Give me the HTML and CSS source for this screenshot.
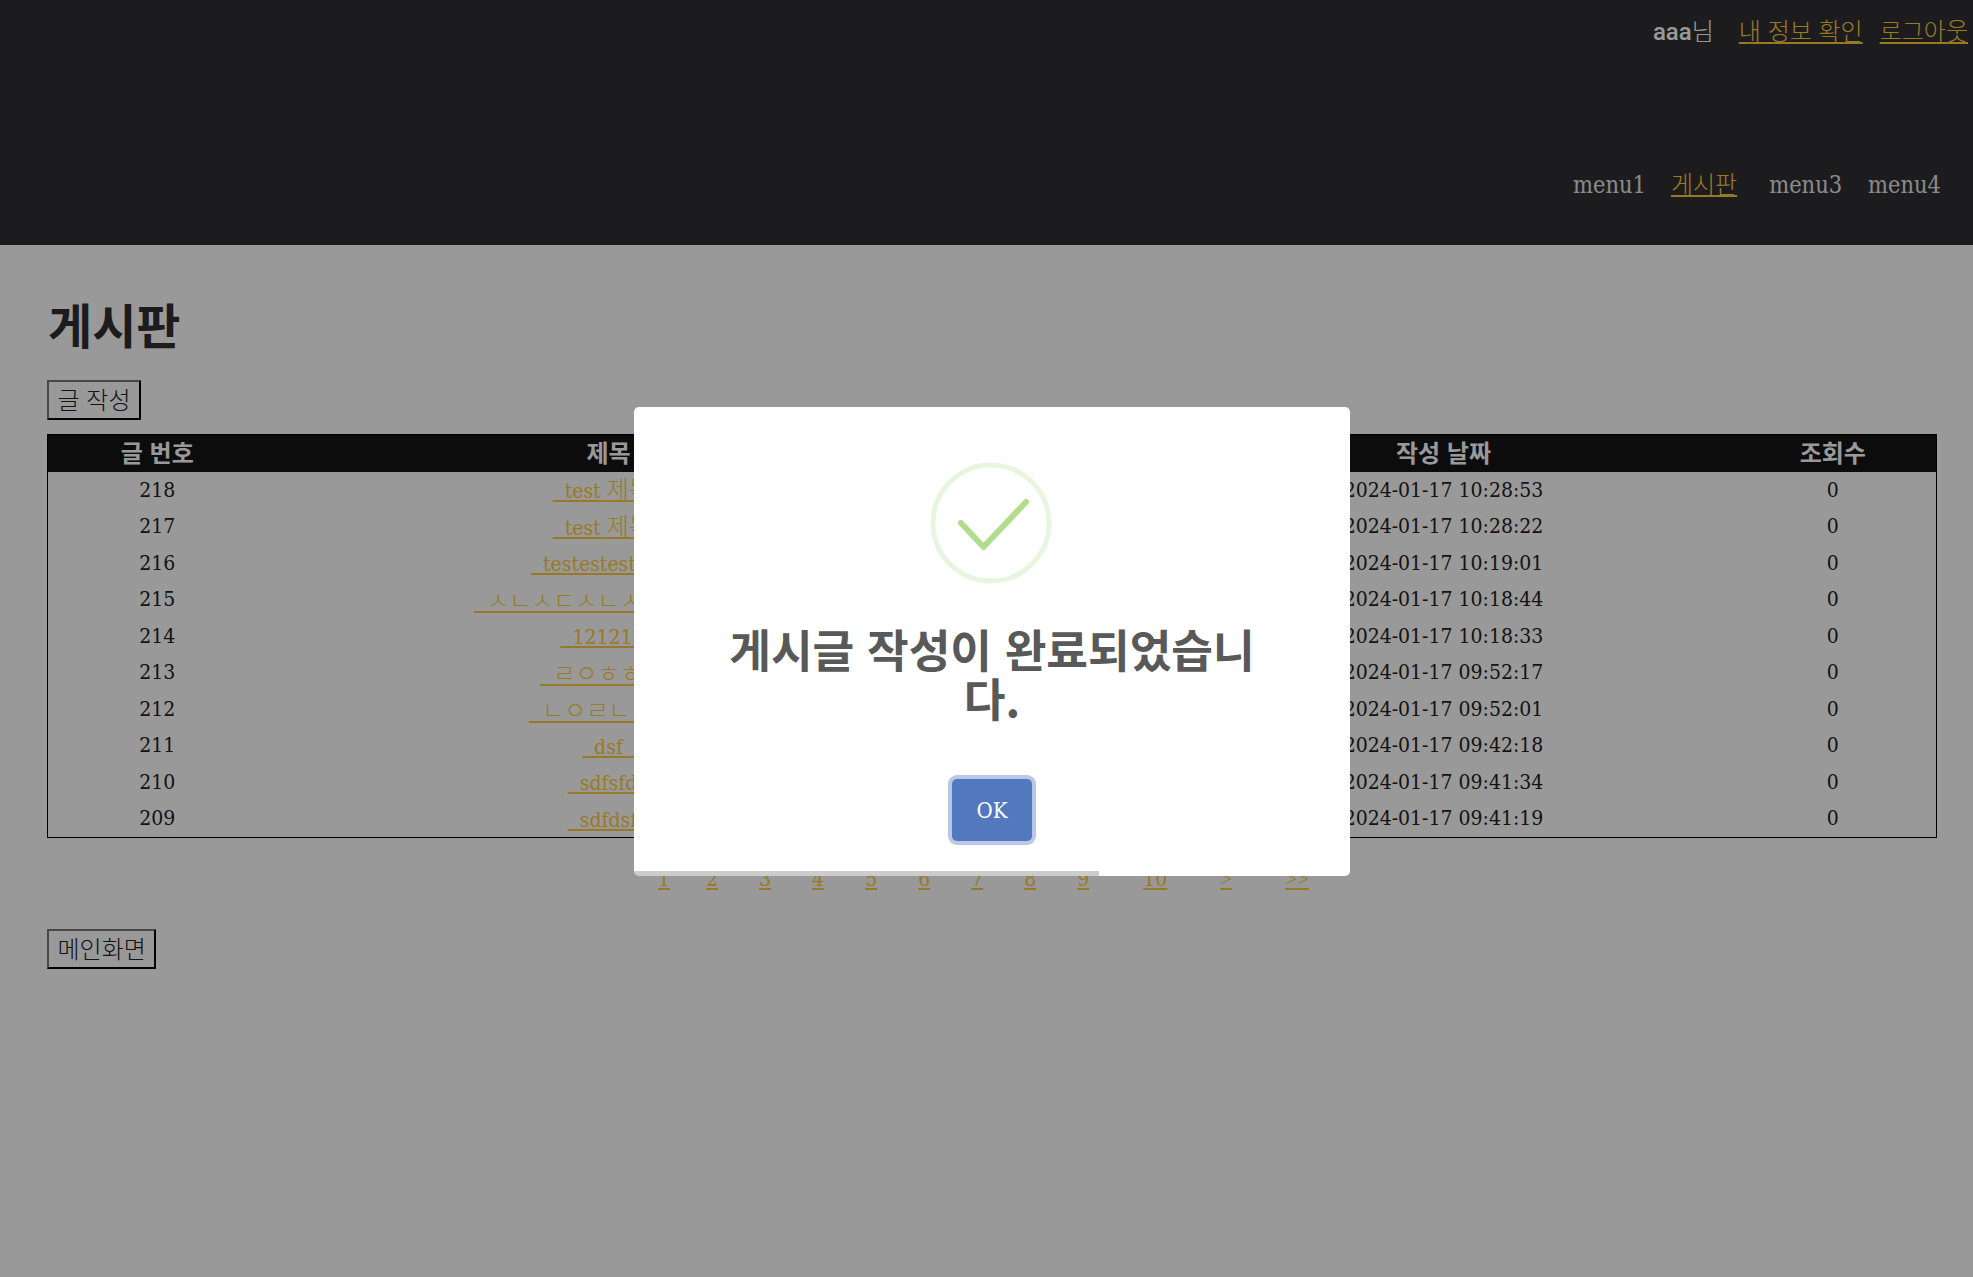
FILE: index.html
```html
<!doctype html>
<html lang="ko">
	<head>
		<meta charset="utf-8">
		<title>게시판</title>
		<link rel="stylesheet" href="styles.css">
	</head>
	<body>
		<div id="head">
			<div class="user-row">
				<span class="user-name"><span class="user-id">aaa</span>님</span>
				<a href="#">내 정보 확인</a>
				<a href="#">로그아웃</a>
			</div>
			<div class="nav-row">
				<a href="#" class="menu latin">menu1</a>
				<a href="#" class="menu-on">게시판</a>
				<a href="#" class="menu menu-3 latin">menu3</a>
				<a href="#" class="menu menu-4 latin">menu4</a>
			</div>
		</div>
		<div id="content">
			<h1>게시판</h1>
			<button class="btn">글 작성</button>
			<table class="board">
				<colgroup>
					<col class="col-no"><col class="col-title"><col class="col-author"><col class="col-date"><col class="col-hits">
				</colgroup>
				<thead>
					<tr><th>글 번호</th><th>제목</th><th>작성자</th><th>작성 날짜</th><th>조회수</th></tr>
				</thead>
				<tbody>
					<tr><td class="latin">218</td><td><a href="#"><span class="latin">&nbsp;&nbsp;test </span>제목&nbsp;&nbsp;</a></td><td class="latin">aaa</td><td class="latin">2024-01-17 10:28:53</td><td class="latin">0</td></tr>
					<tr><td class="latin">217</td><td><a href="#"><span class="latin">&nbsp;&nbsp;test </span>제목&nbsp;&nbsp;</a></td><td class="latin">aaa</td><td class="latin">2024-01-17 10:28:22</td><td class="latin">0</td></tr>
					<tr><td class="latin">216</td><td><a href="#" class="latin">&nbsp;&nbsp;testestestests&nbsp;&nbsp;</a></td><td class="latin">aaa</td><td class="latin">2024-01-17 10:19:01</td><td class="latin">0</td></tr>
					<tr><td class="latin">215</td><td><a href="#">&nbsp;&nbsp;ㅅㄴㅅㄷㅅㄴㅅㄷㅅㄴㅅ&nbsp;&nbsp;</a></td><td class="latin">aaa</td><td class="latin">2024-01-17 10:18:44</td><td class="latin">0</td></tr>
					<tr><td class="latin">214</td><td><a href="#" class="latin">&nbsp;&nbsp;121212&nbsp;&nbsp;</a></td><td class="latin">aaa</td><td class="latin">2024-01-17 10:18:33</td><td class="latin">0</td></tr>
					<tr><td class="latin">213</td><td><a href="#">&nbsp;&nbsp;ㄹㅇㅎㅎㅎ&nbsp;&nbsp;</a></td><td class="latin">aaa</td><td class="latin">2024-01-17 09:52:17</td><td class="latin">0</td></tr>
					<tr><td class="latin">212</td><td><a href="#">&nbsp;&nbsp;ㄴㅇㄹㄴㅇㄹ&nbsp;&nbsp;</a></td><td class="latin">aaa</td><td class="latin">2024-01-17 09:52:01</td><td class="latin">0</td></tr>
					<tr><td class="latin">211</td><td><a href="#" class="latin">&nbsp;&nbsp;dsf&nbsp;&nbsp;</a></td><td class="latin">aaa</td><td class="latin">2024-01-17 09:42:18</td><td class="latin">0</td></tr>
					<tr><td class="latin">210</td><td><a href="#" class="latin">&nbsp;&nbsp;sdfsfd&nbsp;&nbsp;</a></td><td class="latin">aaa</td><td class="latin">2024-01-17 09:41:34</td><td class="latin">0</td></tr>
					<tr><td class="latin">209</td><td><a href="#" class="latin">&nbsp;&nbsp;sdfdsf&nbsp;&nbsp;</a></td><td class="latin">aaa</td><td class="latin">2024-01-17 09:41:19</td><td class="latin">0</td></tr>
				</tbody>
			</table>
			<div class="pages latin">
				<a href="#" class="page-first">1</a>
				<a href="#">2</a>
				<a href="#">3</a>
				<a href="#">4</a>
				<a href="#">5</a>
				<a href="#">6</a>
				<a href="#">7</a>
				<a href="#">8</a>
				<a href="#">9</a>
				<a href="#" class="page-far">10</a>
				<a href="#" class="page-far page-arrow">&gt;</a>
				<a href="#" class="page-far page-arrow">&gt;&gt;</a>
			</div>
			<button class="btn">메인화면</button>
		</div>
		<div class="overlay">
			<div class="modal">
				<svg class="modal-icon" width="122" height="122" viewBox="0 0 122 122">
					<circle cx="61" cy="61" r="58" fill="none" stroke="#e8f5e0" stroke-width="5"/>
					<path d="M31 61 L53.5 85 L96 40" fill="none" stroke="#b4dc8e" stroke-width="6" stroke-linecap="round" stroke-linejoin="round"/>
				</svg>
				<h2 class="modal-title">게시글 작성이 완료되었습니다.</h2>
				<button class="modal-ok latin">OK</button>
				<div class="modal-timer"></div>
			</div>
		</div>
	</body>
</html>
```
FILE: styles.css
```css
html, body {
	margin: 0;
	background-color: #fff;
	color: #222;
	font-family: "Noto Sans CJK KR", "Noto Sans", sans-serif;
	font-size: 24px;
	font-weight: 300;
}
a {
	color: #ffcb3d;
}
.latin {
	font-family: "DejaVu Serif Condensed", "Noto Sans CJK KR", serif;
	font-size: 21px;
	font-weight: 400;
}

/* header */
#head {
	height: 245px;
	box-sizing: border-box;
	background-color: #2f2f32;
	padding-top: 12px;
}
.user-row {
	display: flex;
	justify-content: flex-end;
	align-items: baseline;
	gap: 17px;
	padding-right: 5px;
	line-height: 36px;
}
.user-name {
	color: #fff;
	margin-right: 8px;
}
.user-id {
	font-family: Roboto, sans-serif;
	font-size: 24px;
	font-weight: 500;
}
.nav-row {
	display: flex;
	justify-content: flex-end;
	align-items: baseline;
	gap: 28px;
	padding-right: 32px;
	margin-top: 115px;
	line-height: 36px;
}
.menu {
	color: #e6e6e6;
	text-decoration: none;
	font-size: 23.4px;
}
.menu-on {
	margin-left: -3px;
}
.menu-3 {
	margin-left: 4px;
}
.menu-4 {
	margin-left: -2px;
}

/* content */
#content {
	padding: 0 37px 0 47px;
}
h1 {
	margin: 43px 1px 22px;
	font-size: 48px;
	font-weight: 700;
	line-height: 70px;
	color: #2f2f32;
}
.btn {
	display: block;
	height: 40px;
	box-sizing: border-box;
	padding: 0 8.5px 2px;
	background-color: #fff;
	border: 2px solid;
	border-color: #777 #000 #000 #777;
	color: #222;
	font-family: inherit;
	font-size: 24px;
	font-weight: 300;
	line-height: 32px;
}
.board {
	width: 100%;
	margin-top: 14px;
	border-collapse: collapse;
	border: 1px solid #000;
	table-layout: fixed;
}
.col-no { width: 219px; }
.col-title { width: 684px; }
.col-author { width: 207px; }
.col-date { width: 572px; }
.col-hits { width: 207px; }
.board th {
	height: 37px;
	box-sizing: border-box;
	padding: 0 0 2px;
	background-color: #141414;
	color: #fff;
	font-size: 24px;
	font-weight: 700;
	line-height: 30px;
}
.board td {
	height: 36.5px;
	padding: 0;
	text-align: center;
	line-height: 30px;
}
.pages {
	display: flex;
	justify-content: flex-start;
	gap: 41px;
	margin: 23px 0 0 611px;
	height: 68px;
	line-height: 36px;
}
.page-first {
	margin-right: -5px;
}
.page-far {
	margin-left: 13px;
}
.page-arrow {
	font-family: "Liberation Serif", serif;
	margin-left: 12px;
}

/* the alert lies over the whole page */
.overlay {
	position: fixed;
	inset: 0;
	display: flex;
	align-items: center;
	justify-content: center;
	padding: 6px 0 0 11px;
	background-color: rgba(0, 0, 0, 0.4);
}
.modal {
	position: relative;
	width: 716px;
	height: 469px;
	box-sizing: border-box;
	padding: 55px 75px 0;
	overflow: hidden;
	background-color: #fff;
	border-radius: 5px;
	text-align: center;
}
.modal-icon {
	display: block;
	margin: 0 0 0 221px;
}
.modal-title {
	margin: 40px 0 0;
	color: #595959;
	font-size: 45.3px;
	font-weight: 700;
	line-height: 49px;
}
.modal-ok {
	display: block;
	width: 80px;
	height: 62px;
	margin: 57px auto 0;
	padding: 0;
	background-color: #5278c0;
	border: 0;
	border-radius: 5px;
	box-shadow: 0 0 0 4px #b9c8e4;
	color: #fff;
	font-size: 22px;
}
.modal-timer {
	position: absolute;
	left: 0;
	bottom: 0;
	width: 65%;
	height: 5px;
	background-color: rgba(0, 0, 0, 0.2);
}
```
